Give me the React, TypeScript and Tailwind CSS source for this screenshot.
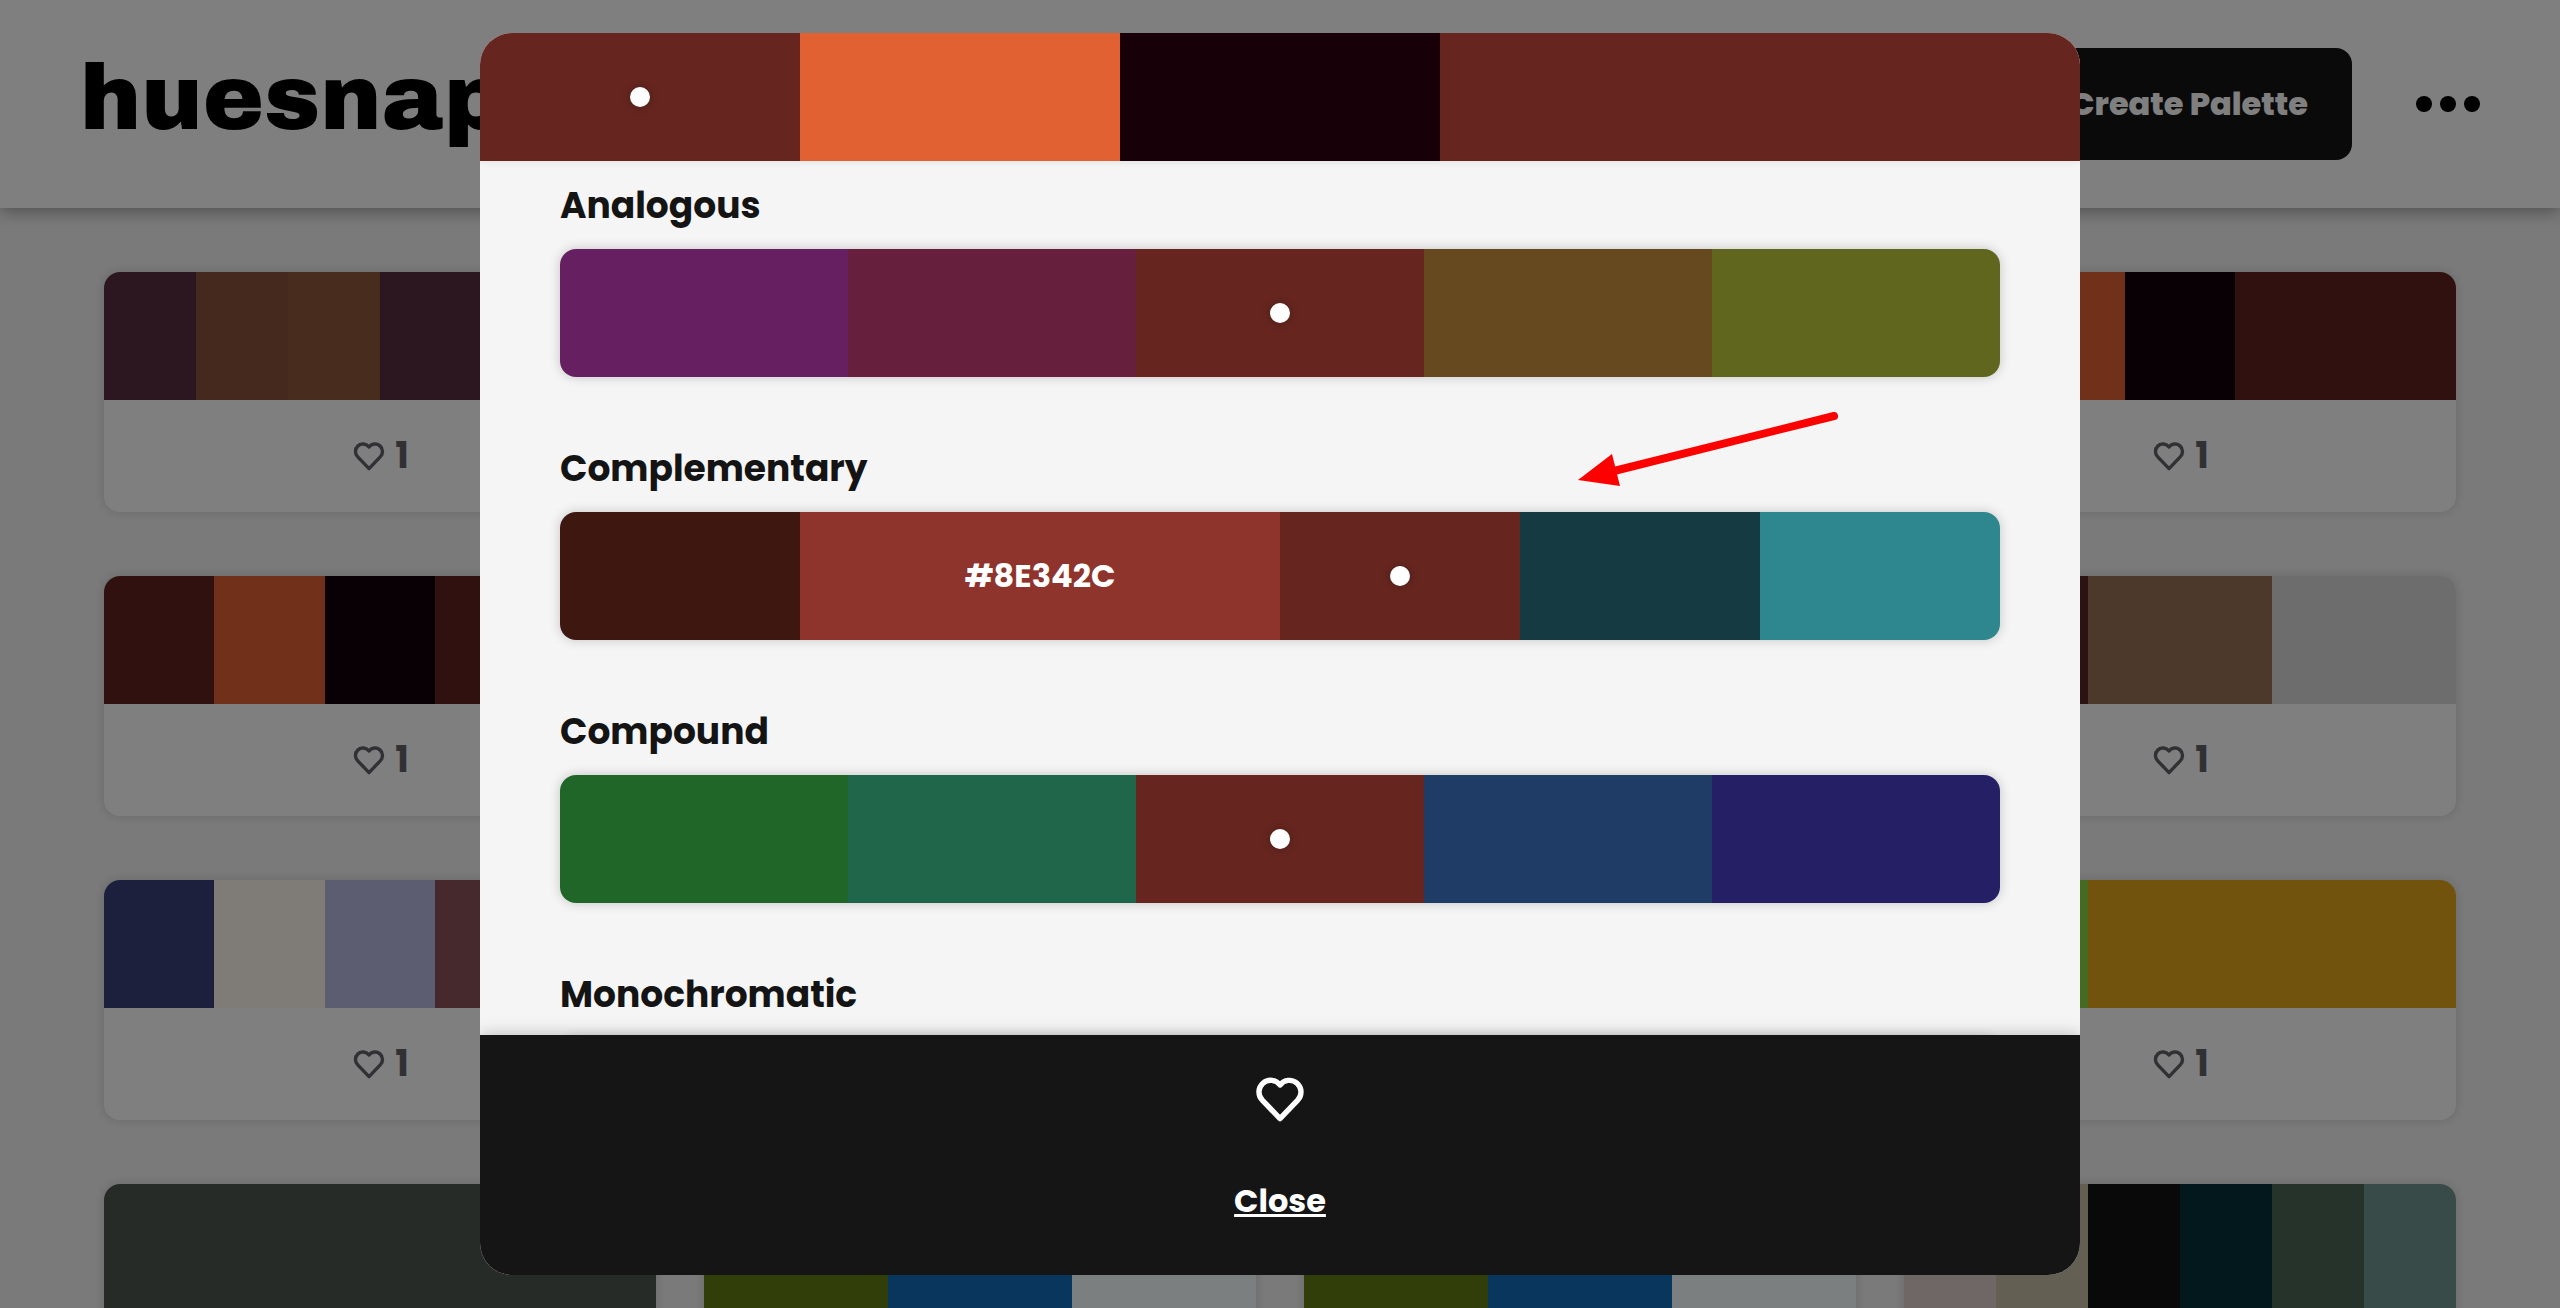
import type { ReactNode } from "react";

interface Swatch {
  color: string;
  span: number;
}

interface Scheme {
  name: string;
  swatches: { color: string; span?: number; label?: string; active?: boolean }[];
}

const EMBER: Swatch[] = [
  { color: "#612320", span: 1 },
  { color: "#e26133", span: 1 },
  { color: "#110008", span: 1 },
  { color: "#612320", span: 2 },
];

const MEADOW: Swatch[] = [
  { color: "#637c14", span: 1 },
  { color: "#106cba", span: 1 },
  { color: "#f8ffff", span: 1 },
];

const PALETTES: { likes: number; swatches: Swatch[] }[] = [
  {
    likes: 1,
    swatches: [
      { color: "#592c3e", span: 1 },
      { color: "#8a523e", span: 1 },
      { color: "#90583a", span: 1 },
      { color: "#592c3e", span: 3 },
    ],
  },
  { likes: 1, swatches: EMBER },
  { likes: 1, swatches: MEADOW },
  { likes: 1, swatches: EMBER },
  { likes: 1, swatches: EMBER },
  { likes: 1, swatches: MEADOW },
  { likes: 1, swatches: EMBER },
  {
    likes: 1,
    swatches: [
      { color: "#5a2424", span: 1 },
      { color: "#987358", span: 1 },
      { color: "#dadada", span: 1 },
    ],
  },
  {
    likes: 1,
    swatches: [
      { color: "#38407a", span: 1 },
      { color: "#fff8ee", span: 1 },
      { color: "#b8bbe0", span: 1 },
      { color: "#8a5258", span: 2 },
    ],
  },
  { likes: 1, swatches: MEADOW },
  { likes: 1, swatches: EMBER },
  {
    likes: 1,
    swatches: [
      { color: "#8ad644", span: 1 },
      { color: "#e2a61a", span: 2 },
    ],
  },
  { likes: 1, swatches: [{ color: "#4e574e", span: 1 }] },
  { likes: 1, swatches: MEADOW },
  { likes: 1, swatches: MEADOW },
  {
    likes: 1,
    swatches: [
      { color: "#dccecc", span: 1 },
      { color: "#c6bea4", span: 1 },
      { color: "#121212", span: 1 },
      { color: "#063038", span: 1 },
      { color: "#4a6654", span: 1 },
      { color: "#729690", span: 1 },
    ],
  },
];

const SCHEMES: Scheme[] = [
  {
    name: "Analogous",
    swatches: [
      { color: "#662061" },
      { color: "#66203e" },
      { color: "#66261f", active: true },
      { color: "#66491f" },
      { color: "#61661f" },
    ],
  },
  {
    name: "Complementary",
    swatches: [
      { color: "#3e1711" },
      { color: "#8e342c", span: 2, label: "#8E342C" },
      { color: "#66261f", active: true },
      { color: "#163a42" },
      { color: "#2e868f" },
    ],
  },
  {
    name: "Compound",
    swatches: [
      { color: "#1f6628" },
      { color: "#1f664b" },
      { color: "#66261f", active: true },
      { color: "#1f3c66" },
      { color: "#251f66" },
    ],
  },
  {
    name: "Monochromatic",
    swatches: [
      { color: "#3e1711" },
      { color: "#521e18" },
      { color: "#66261f", active: true },
      { color: "#7a2d25" },
      { color: "#8e342c" },
    ],
  },
];

function HeartIcon({ className }: { className: string }) {
  return (
    <svg
      className={className}
      viewBox="0 0 24 24"
      fill="none"
      stroke="currentColor"
      strokeWidth={2.3}
      strokeLinecap="round"
      strokeLinejoin="round"
      aria-hidden="true"
    >
      <path d="M19.5 12.572l-7.5 7.828l-7.5 -7.828a5 5 0 1 1 7.5 -6.566a5 5 0 1 1 7.5 6.572" />
    </svg>
  );
}

function Dot() {
  return <span className="size-5 rounded-full bg-white shadow-[0_0_8px_rgba(0,0,0,0.3)]" />;
}

function SwatchCell({ color, span = 1, children }: { color: string; span?: number; children?: ReactNode }) {
  return (
    <div
      className="flex min-w-0 basis-0 items-center justify-center"
      style={{ backgroundColor: color, flexGrow: span }}
    >
      {children}
    </div>
  );
}

function Header() {
  return (
    <header className="relative flex h-52 items-center justify-between bg-white px-20 shadow-[0_4px_16px_rgba(0,0,0,0.35)]">
      <a
        href="#"
        className="pb-3 font-['Archivo_Black','DejaVu_Sans',sans-serif] text-[92px] leading-none font-normal text-black"
      >
        huesnap
      </a>
      <div className="flex items-center gap-16">
        <button className="h-28 rounded-2xl bg-[#141414] px-11 text-[32px] font-extrabold text-white">
          Create Palette
        </button>
        <button className="flex gap-2" aria-label="Menu">
          <span className="size-4 rounded-full bg-black" />
          <span className="size-4 rounded-full bg-black" />
          <span className="size-4 rounded-full bg-black" />
        </button>
      </div>
    </header>
  );
}

function PaletteCard({ likes, swatches }: { likes: number; swatches: Swatch[] }) {
  return (
    <article className="overflow-hidden rounded-2xl bg-white shadow-[0_0_12px_rgba(0,0,0,0.15)]">
      <div className="flex h-32">
        {swatches.map((s, i) => (
          <SwatchCell key={i} color={s.color} span={s.span} />
        ))}
      </div>
      <button className="flex h-28 w-full items-center justify-center gap-2 text-4xl leading-none font-bold text-[#63636b]">
        <HeartIcon className="size-9" />
        {likes}
      </button>
    </article>
  );
}

function SchemeRow({ scheme }: { scheme: Scheme }) {
  return (
    <section>
      <h2 className="text-4xl leading-[54px] font-bold text-[#141414]">{scheme.name}</h2>
      <div className="mt-4 flex h-32 overflow-hidden rounded-2xl shadow-[0_0_12px_rgba(0,0,0,0.2)]">
        {scheme.swatches.map((s) => (
          <SwatchCell key={s.color} color={s.color} span={s.span}>
            {s.active && <Dot />}
            {s.label && <span className="text-[32px] font-bold text-white">{s.label}</span>}
          </SwatchCell>
        ))}
      </div>
    </section>
  );
}

function PaletteModal() {
  return (
    <div className="fixed inset-0 flex items-center justify-center bg-black/50">
      <div
        role="dialog"
        aria-modal="true"
        aria-label="Palette"
        className="flex h-[95vh] w-[62.5vw] flex-col overflow-hidden rounded-[32px] bg-[#f5f5f5]"
      >
        <div className="z-10 flex h-32 shrink-0 shadow-[0_0_8px_rgba(0,0,0,0.1)]">
          <SwatchCell color="#66261f">
            <Dot />
          </SwatchCell>
          <SwatchCell color="#e26133" />
          <SwatchCell color="#170008" />
          <SwatchCell color="#66261f" span={2} />
        </div>
        <div className="flex min-h-0 flex-1 flex-col gap-[65px] overflow-hidden px-20 pt-[18px]">
          {SCHEMES.map((scheme) => (
            <SchemeRow key={scheme.name} scheme={scheme} />
          ))}
        </div>
        <footer className="z-10 flex h-60 shrink-0 flex-col items-center gap-12 bg-[#151515] pt-9 text-white shadow-[0_0_16px_rgba(0,0,0,0.25)]">
          <button aria-label="Like">
            <HeartIcon className="size-14" />
          </button>
          <button className="text-[32px] leading-[52px] font-bold underline decoration-[3px]">Close</button>
        </footer>
      </div>
    </div>
  );
}

// Annotation pointing at the complementary scheme
function Arrow() {
  return (
    <svg
      className="pointer-events-none fixed top-[408px] left-[calc(50%+296px)] h-20 w-[268px]"
      viewBox="0 0 268 80"
      aria-hidden="true"
    >
      <path d="M258 8L34 64" stroke="#ff0000" strokeWidth="8" strokeLinecap="round" />
      <path d="M2 72L36 46L44 78Z" fill="#ff0000" />
    </svg>
  );
}

export default function App() {
  return (
    <div className="h-screen overflow-hidden bg-[#f5f5f5] font-['Poppins','Inter',sans-serif]">
      <Header />
      <main className="grid grid-cols-4 gap-x-12 gap-y-16 px-[104px] py-16">
        {PALETTES.map((p, i) => (
          <PaletteCard key={i} likes={p.likes} swatches={p.swatches} />
        ))}
      </main>
      <PaletteModal />
      <Arrow />
    </div>
  );
}
